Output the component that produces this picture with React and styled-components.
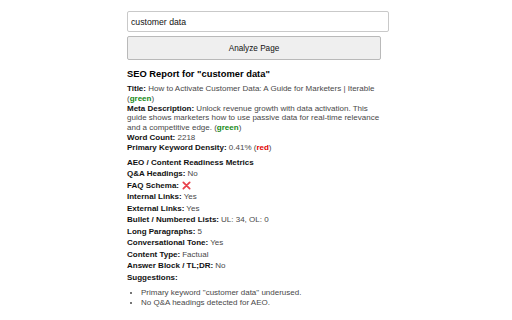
import styled, { createGlobalStyle } from "styled-components";

const GlobalStyle = createGlobalStyle`
  html, body {
    margin: 0;
    padding: 0;
    background: #fff;
  }
  body {
    font-family: "Liberation Sans", Arial, sans-serif;
    color: #000;
  }
`;

const Panel = styled.div`
  width: 254px;
  margin: 11px 0 0 127px;
  font-size: 8px;
`;

const Input = styled.input`
  display: block;
  width: 100%;
  height: 19px;
  padding: 0 3px;
  margin: 0;
  border: 1px solid #c9c9c9;
  border-radius: 2px;
  font-family: "Liberation Sans", Arial, sans-serif;
  font-size: 8.7px;
  color: #111;
  outline: none;
`;

const Button = styled.button`
  display: block;
  width: 100%;
  height: 24px;
  margin-top: 4px;
  background: #efefef;
  border: 1px solid #b9b9b9;
  border-radius: 2px;
  font-family: "Liberation Sans", Arial, sans-serif;
  font-size: 8.2px;
  color: #111;
`;

const Heading = styled.h3`
  margin: 9px 0 4px;
  font-size: 9.36px;
  line-height: 11px;
  font-weight: bold;
`;

const Summary = styled.div`
  line-height: 9.8px;
  color: #484848;
`;

const Label = styled.b`
  color: #111;
`;

const Status = styled.span`
  color: ${(p) => p.$tone};
  font-weight: bold;
`;

const SubHeading = styled.div`
  margin-top: 5px;
  font-weight: bold;
  line-height: 10px;
  color: #111;
`;

const Metric = styled.div`
  margin-top: 1.5px;
  line-height: 10px;
  color: #484848;
  display: flex;
  align-items: center;
  gap: 2px;
`;

const Suggestions = styled.ul`
  margin: 5px 0 0;
  padding-left: 14px;
  line-height: 10px;
  color: #484848;
`;

const Cross = () => (
  <svg width="9" height="9" viewBox="0 0 10 10" style={{ marginLeft: 1 }}>
    <path d="M1.5 1.5 L8.5 8.5 M8.5 1.5 L1.5 8.5" stroke="#e8414b" strokeWidth="2" strokeLinecap="round" />
  </svg>
);

const metrics = [
  ["Q&A Headings", "No"],
  ["FAQ Schema", <Cross key="x" />],
  ["Internal Links", "Yes"],
  ["External Links", "Yes"],
  ["Bullet / Numbered Lists", "UL: 34, OL: 0"],
  ["Long Paragraphs", "5"],
  ["Conversational Tone", "Yes"],
  ["Content Type", "Factual"],
  ["Answer Block / TL;DR", "No"],
];

export default function App() {
  return (
    <>
      <GlobalStyle />
      <Panel>
        <Input defaultValue="customer data" />
        <Button>Analyze Page</Button>
        <Heading>SEO Report for "customer data"</Heading>
        <Summary>
          <Label>Title:</Label> How to Activate Customer Data: A Guide for Marketers | Iterable (
          <Status $tone="#168a16">green</Status>)
          <br />
          <Label>Meta Description:</Label> Unlock revenue growth with data activation. This guide shows marketers how
          to use passive data for real-time relevance and a competitive edge. (<Status $tone="#168a16">green</Status>)
          <br />
          <Label>Word Count:</Label> 2218
          <br />
          <Label>Primary Keyword Density:</Label> 0.41% (<Status $tone="#e00000">red</Status>)
        </Summary>
        <SubHeading>AEO / Content Readiness Metrics</SubHeading>
        {metrics.map(([k, v]) => (
          <Metric key={k}>
            <Label>{k}:</Label> {v}
          </Metric>
        ))}
        <Metric>
          <Label>Suggestions:</Label>
        </Metric>
        <Suggestions>
          <li>Primary keyword "customer data" underused.</li>
          <li>No Q&amp;A headings detected for AEO.</li>
        </Suggestions>
      </Panel>
    </>
  );
}
